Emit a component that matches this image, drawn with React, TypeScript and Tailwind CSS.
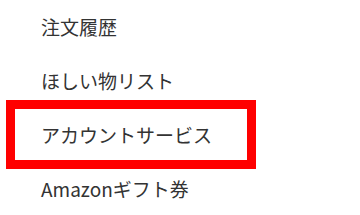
import React from "react";

const items = ["注文履歴", "ほしい物リスト", "アカウントサービス", "Amazonギフト券"];

export default function App() {
  return (
    <div
      className="relative w-[360px] h-[215px] bg-white overflow-hidden"
      style={{ fontFamily: '"Noto Sans CJK JP", "Noto Sans", sans-serif' }}
    >
      <ul className="flex flex-col pl-[41px]">
        {items.map((t) => (
          <li key={t} className="h-[54px] flex items-center text-[19px] text-[#333333]">
            {t}
          </li>
        ))}
      </ul>
      <div className="absolute left-[6px] top-[100px] w-[250px] h-[69px] border-[9px] border-[#ff0000]" />
    </div>
  );
}
